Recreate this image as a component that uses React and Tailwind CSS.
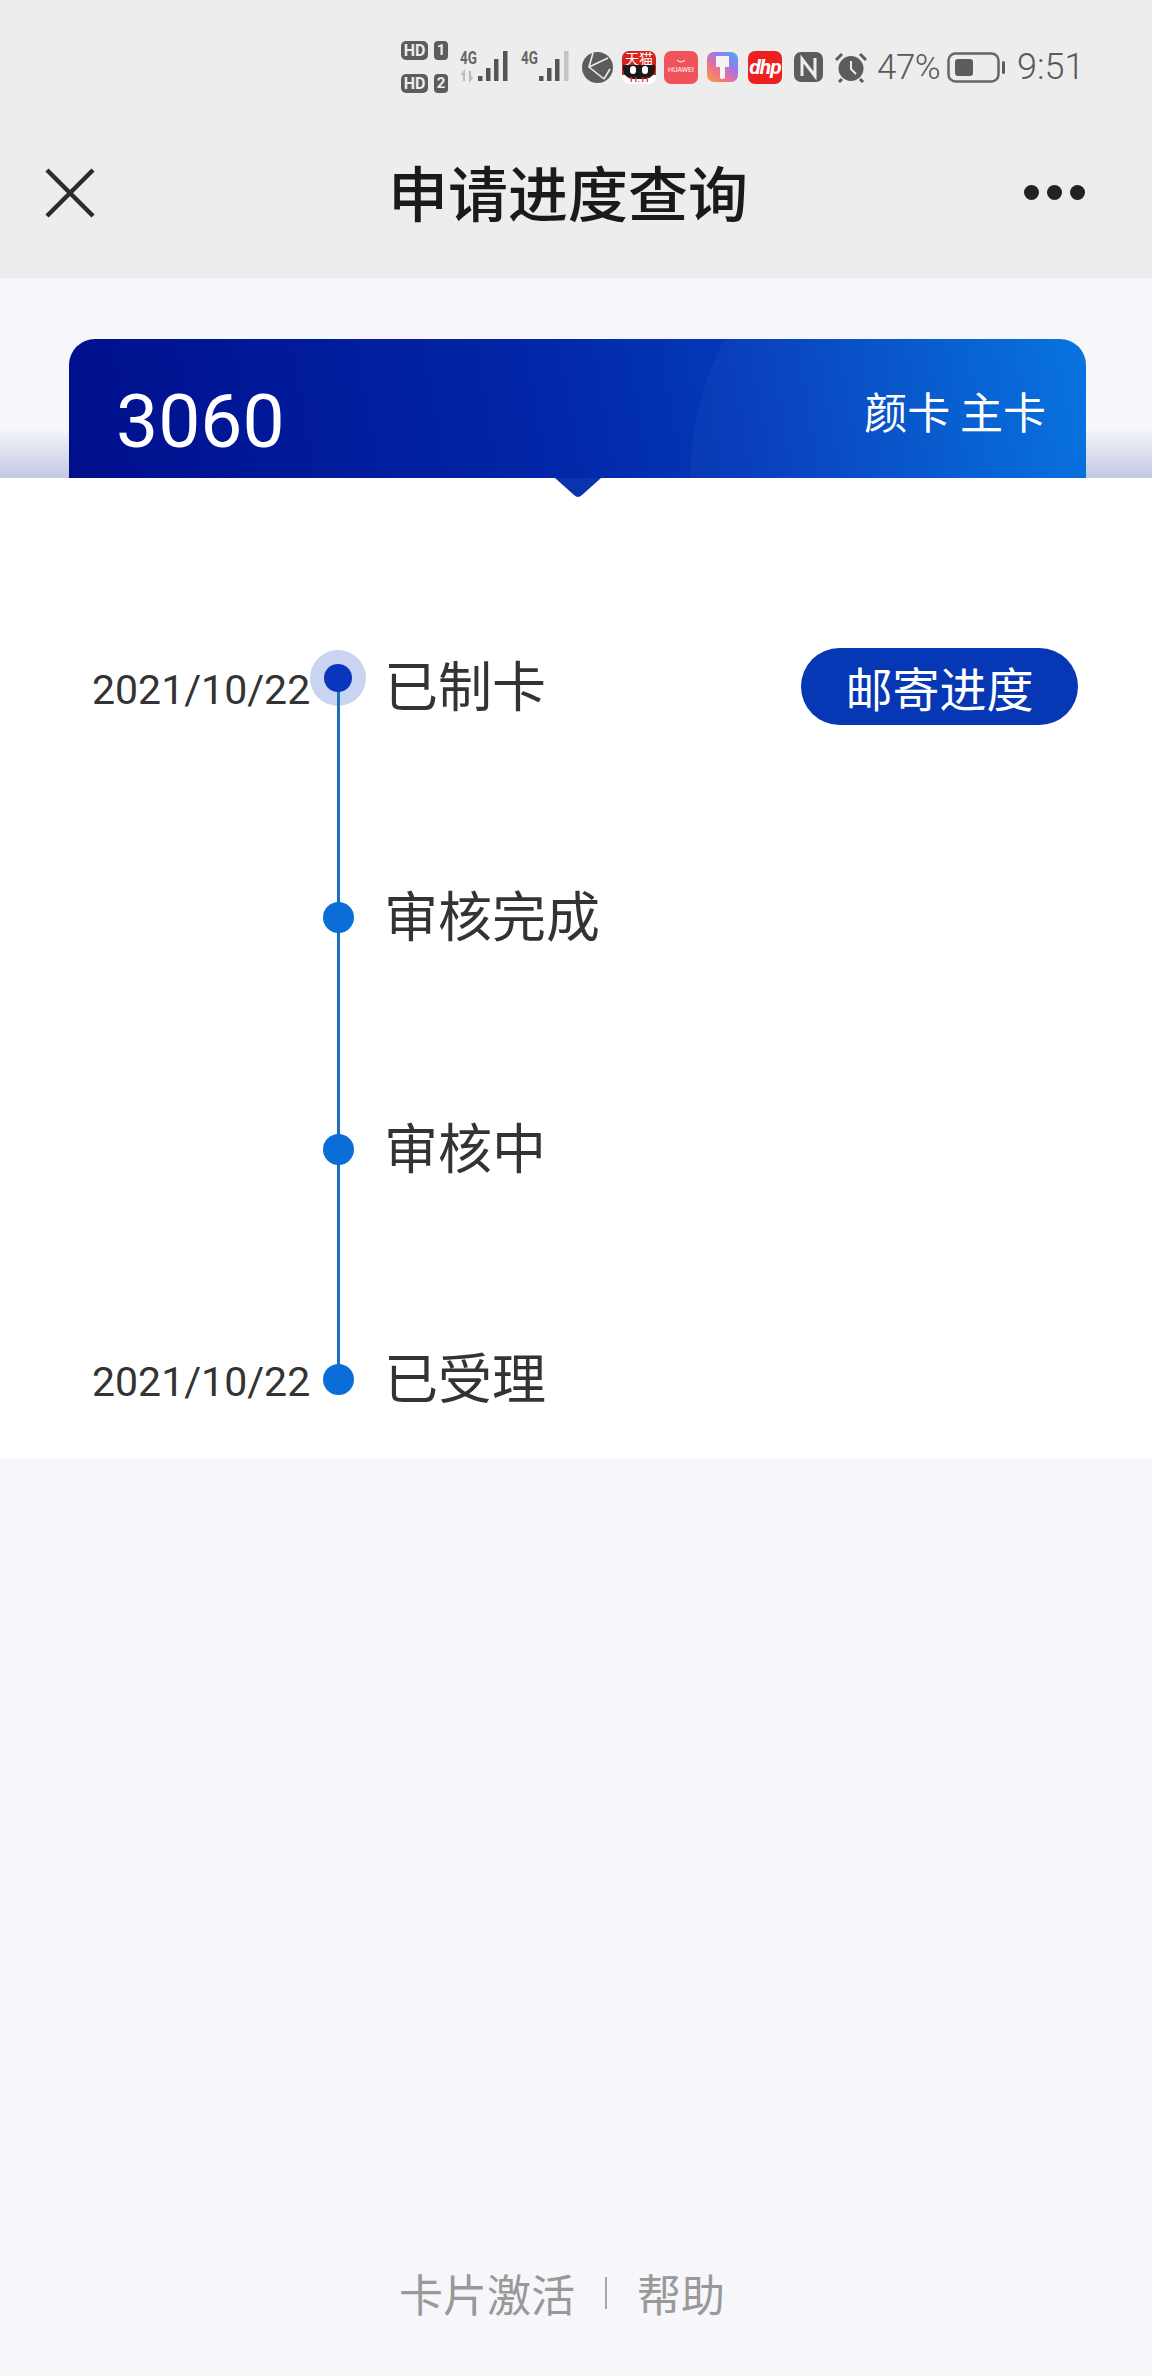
const cjk = "font-['Noto_Sans_CJK_SC','Noto_Sans',sans-serif]";
const roboto = "font-['Roboto','Noto_Sans_CJK_SC',sans-serif]";

function Signal({ lastBar, arrows }) {
  return (
    <svg width="49" height="40" viewBox="0 -4 49 40">
      <text x="0" y="13" fontSize="18" fontWeight="700" fill="#666" fontFamily="Roboto" textLength="17" lengthAdjust="spacingAndGlyphs">4G</text>
      {arrows && <path d="M4 30v-9l-2.500 3M10 20v9l2.500-3" stroke="#bbb" strokeWidth="2" fill="none" />}
      <rect x="18" y="25" width="4.500" height="5" fill="#555" />
      <rect x="26" y="17" width="4.500" height="13" fill="#555" />
      <rect x="34" y="8" width="4.500" height="22" fill="#555" />
      <rect x="43" y="0" width="4.500" height="30" fill={lastBar} />
    </svg>
  );
}

function HdBadge({ n }) {
  return (
    <div className="flex h-[19px] items-stretch gap-[6px]">
      <span className={`${roboto} flex w-[27px] items-center justify-center rounded-[5px] bg-[#5c5c5c] text-[16px] font-bold leading-none text-[#ededed]`}>HD</span>
      <span className={`${roboto} flex w-[14px] items-center justify-center rounded-[4px] bg-[#5c5c5c] text-[15px] font-bold leading-none text-[#ededed]`}>{n}</span>
    </div>
  );
}

function StatusBar() {
  return (
    <div className="flex h-[130px] items-center pl-[401px] pt-[4px] text-[#595959]">
      <div className="flex w-[47px] flex-col gap-[14px]">
        <HdBadge n="1" />
        <HdBadge n="2" />
      </div>
      <div className="ml-[12px]"><Signal lastBar="#555" arrows /></div>
      <div className="ml-[12px]"><Signal lastBar="#c4c4c4" /></div>
      <svg className="ml-[12px]" width="31" height="31" viewBox="0 0 31 31">
        <circle cx="15.500" cy="15.500" r="15.500" fill="#5c5c5c" />
        <path d="M11 1 7 15l15 12M7 15 26 6M22 27l6-10" stroke="#ededed" strokeWidth="1.600" fill="none" />
      </svg>
      <div className="relative ml-[9px] h-[33px] w-[34px] rounded-[7px] bg-white">
        <div className="absolute inset-x-0 top-0 h-[24px] rounded-t-[7px] bg-[#d8231c]" />
        <span className={`${cjk} absolute left-0 top-0 w-full text-center text-[14px] leading-[15px] text-white`}>天猫</span>
        <div className="absolute left-[1px] top-[14px] h-[14px] w-[32px] rounded-b-[10px] bg-[#1a1a1a]" />
        <div className="absolute left-[8px] top-[15px] h-[8px] w-[6px] rounded-full bg-white" />
        <div className="absolute left-[20px] top-[15px] h-[8px] w-[6px] rounded-full bg-white" />
        <span className={`${roboto} absolute bottom-0 left-0 w-full text-center text-[8px] font-bold leading-[8px] text-[#d8231c]`}>11.11</span>
      </div>
      <div className="ml-[8px] flex h-[33px] w-[34px] flex-col items-center rounded-[7px] bg-[#f0535b]">
        <svg className="mt-[8px]" width="10" height="5" viewBox="0 0 10 5"><path d="M1 1q4 4 8 0" stroke="#fff" strokeWidth="1" fill="none" /></svg>
        <span className={`${roboto} mt-[3px] text-[7px] leading-none text-white`}>HUAWEI</span>
      </div>
      <div className="ml-[9px] flex h-[30px] w-[31px] justify-center rounded-[7px] bg-[linear-gradient(40deg,#f6a23a_0%,#ef6f8f_35%,#9a78ee_65%,#3fb2ee_100%)]">
        <svg width="31" height="30" viewBox="0 0 31 30"><path d="M9 4h13v11h-4v11q-2.500 2-5 0V15H9z" fill="#f3f3f3" /></svg>
      </div>
      <div className="ml-[10px] flex h-[33px] w-[34px] items-center justify-center rounded-[7px] bg-[#ee1f1f]">
        <span className={`${roboto} text-[21px] font-bold italic leading-none tracking-[-1px] text-white`}>dhp</span>
      </div>
      <svg className="ml-[12px]" width="29" height="30" viewBox="0 0 29 30">
        <rect width="29" height="30" rx="7" fill="#5c5c5c" />
        <path d="M8 24V7l13 17V6" stroke="#ededed" strokeWidth="3" fill="none" />
      </svg>
      <svg className="ml-[11px]" width="34" height="31" viewBox="0 0 34 31">
        <circle cx="17" cy="16.500" r="12.500" fill="#5c5c5c" />
        <path d="M17 9v8l5 5" stroke="#ededed" strokeWidth="2" fill="none" />
        <path d="M2 8 8 2M32 8l-6-6M8 27l-3 3M26 27l3 3" stroke="#5c5c5c" strokeWidth="3" fill="none" />
      </svg>
      <span className={`${roboto} ml-[9px] w-[63px] text-[35px] font-light leading-none tracking-[-0.5px]`}>47%</span>
      <svg className="ml-[7px]" width="58" height="31" viewBox="0 0 58 31">
        <rect x="1.500" y="1.500" width="50" height="28" rx="7" fill="none" stroke="#666" strokeWidth="2.500" />
        <rect x="8" y="7" width="18" height="17" rx="3" fill="#5c5c5c" />
        <rect x="55" y="9" width="3" height="13" rx="1.500" fill="#5c5c5c" />
      </svg>
      <span className={`${roboto} ml-[12px] text-[36px] font-light leading-none`}>9:51</span>
    </div>
  );
}

function NavBar() {
  return (
    <div className="grid h-[148px] grid-cols-[1fr_auto_1fr] items-start pl-[45px] pr-[67px] pt-[38px]">
      <svg width="50" height="50" viewBox="0 0 50 50">
        <path d="M2 2 48 48M48 2 2 48" stroke="#2b2b2b" strokeWidth="4.500" fill="none" />
      </svg>
      <h1 className={`${cjk} ml-[6px] text-[60px] font-medium leading-[46px] text-[#1a1a1a]`}>申请进度查询</h1>
      <div className="mt-[17px] flex justify-end gap-[8px]">
        <span className="h-[15px] w-[15px] rounded-full bg-[#222]" />
        <span className="h-[15px] w-[15px] rounded-full bg-[#222]" />
        <span className="h-[15px] w-[15px] rounded-full bg-[#222]" />
      </div>
    </div>
  );
}

function CardHeader() {
  return (
    <div className="relative h-[200px] pl-[69px] pt-[61px]">
      <div className="absolute inset-x-0 bottom-0 h-[50px] bg-gradient-to-b from-[#f6f6fb] to-[#c3c8e4]" />
      <div className="relative flex h-[139px] w-[1017px] items-start justify-between overflow-hidden rounded-t-[26px] bg-[linear-gradient(80deg,#000f8c_0%,#0125a6_45%,#0338b8_65%,#0070de_100%)] pl-[47px] pr-[40px] text-white">
        <div className="absolute left-[621px] top-[-160px] h-[600px] w-[600px] rounded-full bg-white/[0.03]" />
        <span className={`${roboto} relative mt-[38px] text-[75px] leading-[88px]`}>3060</span>
        <span className={`${cjk} relative mt-[43px] whitespace-pre text-[43px] leading-[56px]`}>颜卡 主卡</span>
      </div>
    </div>
  );
}

const rows = [
  { label: "已制卡", date: "2021/10/22", active: true, dateMt: "mt-[23px]", labelMt: "mt-[12px]", gap: "mb-[183px]" },
  { label: "审核完成", labelMt: "mt-[-6px]", gap: "mb-[176px]" },
  { label: "审核中", labelMt: "mt-[-6px]", gap: "mb-[174px]" },
  { label: "已受理", date: "2021/10/22", dateMt: "mt-[5px]", labelMt: "mt-[-7px]" },
];

function Timeline() {
  return (
    <div className="relative h-[981px] bg-white pt-[172px]">
      <div className="absolute left-[555px] top-0">
        <svg width="46" height="20" viewBox="0 0 46 20"><path d="M0 0h46L27 17q-4 4-8 0z" fill="#0a34ad" /></svg>
      </div>
      <div className="absolute left-[337px] top-[200px] h-[701px] w-[3px] bg-[#1c6fbe]" />
      {rows.map((row) => (
        <div key={row.label} className={`flex h-[56px] items-center ${row.gap || ""}`}>
          <div className="w-[310px] pl-[92px]">
            {row.date && <span className={`${roboto} block ${row.dateMt} text-[41px] leading-[46px] text-[#333]`}>{row.date}</span>}
          </div>
          <div className={`flex h-[56px] w-[56px] items-center justify-center rounded-full ${row.active ? "bg-[#c8d4f1]" : ""}`}>
            {row.active
              ? <span className="relative h-[28px] w-[28px] rounded-full bg-[#0a36bd]" />
              : <span className="relative h-[31px] w-[31px] rounded-full bg-[#0a6dd8]" />}
          </div>
          <span className={`${cjk} ml-[18px] ${row.labelMt} text-[54px] leading-[64px] text-[#333]`}>{row.label}</span>
          {row.active && (
            <button className={`${cjk} ml-auto mr-[74px] mt-[17px] h-[77px] w-[277px] shrink-0 rounded-full bg-[#0637b5] text-[47px] leading-none text-white`}>邮寄进度</button>
          )}
        </div>
      ))}
    </div>
  );
}

function Footer() {
  return (
    <div className={`${cjk} mt-auto flex h-[118px] items-start pl-[399px] text-[44px] leading-[70px] text-[#999]`}>
      <span>卡片激活</span>
      <span className="ml-[30px] mt-[19px] h-[32px] w-[2px] bg-[#aaa]" />
      <span className="ml-[30px]">帮助</span>
    </div>
  );
}

export default function App() {
  return (
    <div className="flex h-[2376px] w-[1152px] flex-col overflow-hidden bg-[#f6f6fb]">
      <div className="bg-[#ededed]">
        <StatusBar />
        <NavBar />
      </div>
      <CardHeader />
      <Timeline />
      <Footer />
    </div>
  );
}
